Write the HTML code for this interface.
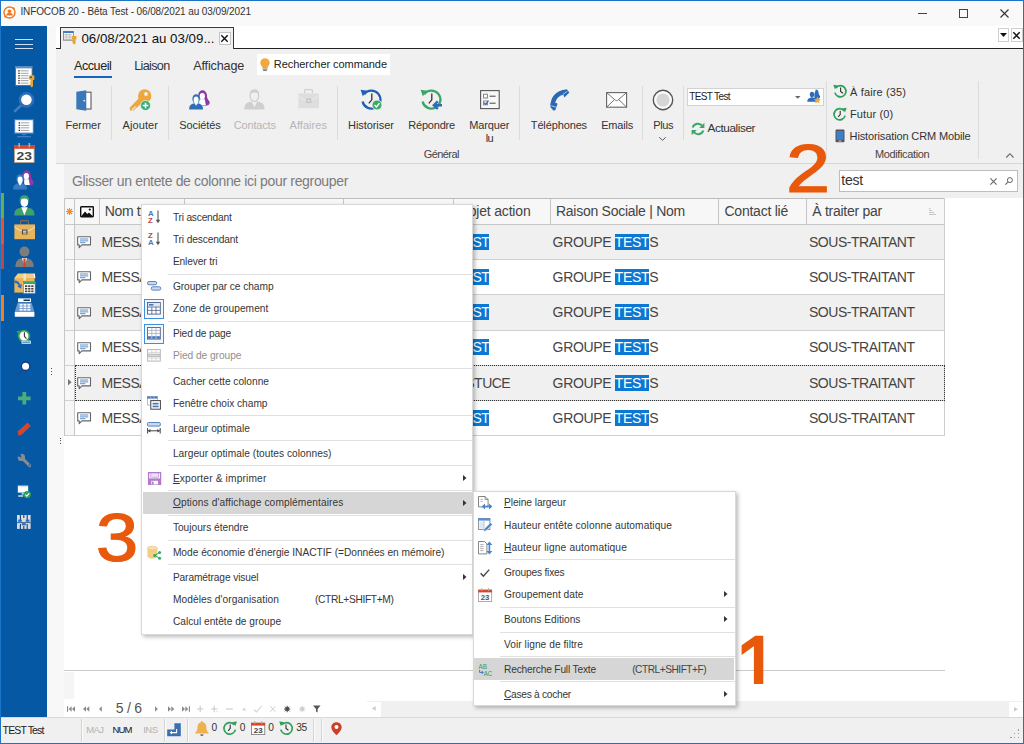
<!DOCTYPE html>
<html lang="fr">
<head>
<meta charset="utf-8">
<title>INFOCOB 20 - Bêta Test</title>
<style>
html,body{margin:0;padding:0;}
body{width:1024px;height:744px;overflow:hidden;background:#f8f8f8;position:relative;font-family:"Liberation Sans",sans-serif;font-size:10px;color:#333;}
#win{position:absolute;left:0;top:0;width:1024px;height:744px;overflow:hidden;}
#win>*{position:absolute;box-sizing:content-box;}
.t{white-space:nowrap;}
svg{display:block;overflow:visible;}
u{text-decoration:underline;text-underline-offset:1px;}
.hl{background:#0b78d4;color:#fff;}
</style>
</head>
<body>
<div id="win">
<div style="left:1px;top:1px;width:1022px;height:25px;background:#f9f9f9;"></div>
<div class="t" style="left:20.40px;top:6.79px;font-size:10px;line-height:10px;color:#333;letter-spacing:-0.103px;">INFOCOB 20 - Bêta Test - 06/08/2021 au 03/09/2021</div>
<div style="left:918px;top:13px;width:9px;height:1px;background:#444;"></div>
<div style="left:959px;top:9px;width:7px;height:7px;border:1px solid #444;"></div>
<svg style="left:1000px;top:8.5px;" width="9" height="9" viewBox="0 0 9 9"><path d="M0.5 0.5L8.5 8.5M8.5 0.5L0.5 8.5" stroke="#333" stroke-width="1.1" fill="none"/></svg>
<div style="left:1px;top:26px;width:46px;height:691px;background:#0458a4;"></div>
<div style="left:56px;top:26px;width:967px;height:22px;background:#fff;"></div>
<div style="left:998px;top:28px;width:9px;height:12px;background:#fff;border:1px solid #cfcfcf;"></div>
<svg style="left:1000px;top:32.5px;" width="7" height="4" viewBox="0 0 7 4"><path d="M0 0H7L3.5 4Z" fill="#111"/></svg>
<div style="left:1011px;top:28px;width:10px;height:12px;background:#fff;border:1px solid #cfcfcf;"></div>
<svg style="left:1013px;top:31.5px;" width="7" height="7" viewBox="0 0 7 7"><path d="M0.3 0.3L6.7 6.7M6.7 0.3L0.3 6.7" stroke="#111" stroke-width="1.5" fill="none"/></svg>
<div style="left:56px;top:49px;width:967px;height:114px;background:#f0f0f0;"></div>
<div style="left:56px;top:163px;width:967px;height:1px;background:#d6d6d6;"></div>
<div style="left:56px;top:48px;width:967px;height:1px;background:#222;"></div>
<div style="left:60px;top:27px;width:172px;height:21px;background:#f0f0f0;border:1px solid #3a3a3a;border-bottom:none;"></div>
<div class="t" style="left:81.40px;top:31.99px;font-size:13.3px;line-height:13.3px;color:#111;">06/08/2021 au 03/09...</div>
<div style="left:219px;top:32.2px;width:9.8px;height:10.8px;background:#fff;border:1px solid #c4c4c4;"></div>
<svg style="left:221.4px;top:35px;" width="7" height="7" viewBox="0 0 7 7"><path d="M0.3 0.3L6.7 6.7M6.7 0.3L0.3 6.7" stroke="#111" stroke-width="1.4" fill="none"/></svg>
<div style="left:64px;top:164px;width:959px;height:34px;background:#f0f0f0;"></div>
<div class="t" style="left:72.00px;top:174.40px;font-size:14px;line-height:14px;color:#7b7b7b;letter-spacing:-0.337px;">Glisser un entete de colonne ici pour regrouper</div>
<div style="left:64px;top:198px;width:959px;height:519px;background:#fff;"></div>
<div style="left:1px;top:717px;width:1022px;height:26px;background:#f0f0f0;"></div>
<div style="left:1px;top:717px;width:1022px;height:1px;background:#d9d9d9;"></div>
<div style="left:15px;top:39px;width:18px;height:1.1px;background:#cfe0f2;"></div>
<div style="left:15px;top:43.7px;width:18px;height:1.1px;background:#cfe0f2;"></div>
<div style="left:15px;top:48.2px;width:18px;height:1.1px;background:#cfe0f2;"></div>
<div style="left:1px;top:192.5px;width:3.2px;height:25.3px;background:#6ab04a;"></div>
<div style="left:1px;top:217.8px;width:3.2px;height:25.8px;background:#ee5228;"></div>
<div style="left:1px;top:243.6px;width:3.2px;height:25.2px;background:#c4463e;"></div>
<div style="left:1px;top:295px;width:3.2px;height:25.5px;background:#f07f22;"></div>
<svg style="left:14.5px;top:66px;" width="20" height="21" viewBox="0 0 20 21"><rect x="0.5" y="0.6" width="16.6" height="18.8" fill="#fff" stroke="#6a6a6a" stroke-width="0.9"/><rect x="0.2" y="0.2" width="17.2" height="2.2" fill="#5b8fd0"/><rect x="3.2" y="4.20" width="1.6" height="1.3" fill="#444"/><rect x="5.6" y="4.40" width="8" height="0.9" fill="#9a9a9a"/><rect x="3.2" y="6.65" width="1.6" height="1.3" fill="#444"/><rect x="5.6" y="6.85" width="8" height="0.9" fill="#9a9a9a"/><rect x="3.2" y="9.10" width="1.6" height="1.3" fill="#444"/><rect x="5.6" y="9.30" width="8" height="0.9" fill="#9a9a9a"/><rect x="3.2" y="11.55" width="1.6" height="1.3" fill="#444"/><rect x="5.6" y="11.75" width="8" height="0.9" fill="#9a9a9a"/><rect x="3.2" y="14.00" width="1.6" height="1.3" fill="#444"/><rect x="5.6" y="14.20" width="8" height="0.9" fill="#9a9a9a"/><rect x="3.2" y="16.45" width="1.6" height="1.3" fill="#444"/><rect x="5.6" y="16.65" width="8" height="0.9" fill="#9a9a9a"/><path d="M13 9.3h5.6a0.8 0.8 0 0 1 .8 .8v3.2a0.8 0.8 0 0 1-.8 .8h-.6v6.2l-1.2 1.2-1.2-1.2v-.9l-1-.6 1-.8v-.8l-1-.6 1-.8v-1.7h-.6a0.8 0.8 0 0 1-.8-.8v-3.2a0.8 0.8 0 0 1 .8-.8z" fill="#e9a52f"/><rect x="14.6" y="10.6" width="2.4" height="1.3" fill="#0458a4"/></svg>
<svg style="left:13px;top:91px;" width="22" height="22" viewBox="0 0 22 22"><path d="M8.2 14.2L2 20" stroke="#3f7cc4" stroke-width="2.6" stroke-linecap="round"/><circle cx="13.4" cy="8.8" r="6.6" fill="#fff" stroke="#2f6db8" stroke-width="2.6"/></svg>
<svg style="left:14px;top:118.6px;" width="20" height="19" viewBox="0 0 20 19"><rect x="0.6" y="0.6" width="18.8" height="13.6" fill="#fff" stroke="#3f7cc4" stroke-width="1.2"/><rect x="4.6" y="3.20" width="1.5" height="1.3" fill="#333"/><rect x="6.8" y="3.40" width="8.4" height="0.9" fill="#9a9a9a"/><rect x="4.6" y="5.70" width="1.5" height="1.3" fill="#333"/><rect x="6.8" y="5.90" width="8.4" height="0.9" fill="#9a9a9a"/><rect x="4.6" y="8.20" width="1.5" height="1.3" fill="#333"/><rect x="6.8" y="8.40" width="8.4" height="0.9" fill="#9a9a9a"/><rect x="4.6" y="10.70" width="1.5" height="1.3" fill="#333"/><rect x="6.8" y="10.90" width="8.4" height="0.9" fill="#9a9a9a"/><rect x="8" y="15" width="4" height="1.2" fill="#3f7cc4"/><rect x="3.2" y="17.2" width="13.6" height="1.1" fill="#4b88cc"/></svg>
<svg style="left:13.8px;top:143px;" width="21" height="20" viewBox="0 0 21 20"><rect x="0.5" y="2.4" width="19.6" height="17" fill="#fff" stroke="#c9a183" stroke-width="0.8"/><rect x="0.1" y="2" width="20.4" height="3.8" fill="#d9462c"/><rect x="4.4" y="0" width="1.5" height="4.2" fill="#b9b0a0"/><rect x="14.6" y="0" width="1.5" height="4.2" fill="#b9b0a0"/><text x="10.3" y="17.2" font-family="Liberation Sans, sans-serif" font-size="11.5" font-weight="700" text-anchor="middle" fill="#444" textLength="15.5" lengthAdjust="spacingAndGlyphs">23</text></svg>
<svg style="left:13.3px;top:169.8px;" width="22" height="20" viewBox="0 0 22 20"><ellipse cx="13.500" cy="5.300" rx="4.300" ry="5" fill="#8d3aa6"/><path d="M16.200 2.400c2.200 2.200 1.400 5.800 3.600 8.200 1.700 1.900 1 4.800-1.800 4.800h-4.600v-8z" fill="#8d3aa6"/><path d="M11.200 9.200h4.600l1 5.800h-5.600z" fill="#fff"/><ellipse cx="13.300" cy="6.300" rx="2.600" ry="3.300" fill="#fff"/><path d="M0.200 19.500c0-3.900 1.500-5.500 4.300-6.100l2.600-.7 2.600.7c2.800.6 4.300 2.200 4.300 6.100z" fill="#3a7bc6"/><ellipse cx="7.100" cy="8.900" rx="3.700" ry="4.700" fill="#3a7bc6"/><ellipse cx="7.100" cy="9.900" rx="2.500" ry="3.400" fill="#fff"/><path d="M5.300 13l1.800 2.800 1.800-2.800z" fill="#fff"/></svg>
<svg style="left:13.5px;top:194.5px;" width="21" height="21" viewBox="0 0 21 21"><path d="M0.300 20.400c0-5 2-6.600 5.400-7.400l4.700-1.200 4.700 1.200c3.400.8 5.400 2.400 5.400 7.400z" fill="#3fa06c"/><path d="M7.200 12.200l3.200 8 3.200-8z" fill="#fff"/><ellipse cx="10.400" cy="7" rx="3.900" ry="5" fill="#fff"/><path d="M5.800 7.200c-.8-4.800 1.400-7 4.600-7s5.400 2.200 4.600 7c-.6-2.600-2-3.600-4.600-3.600s-4 1-4.600 3.600z" fill="#3fa06c"/></svg>
<svg style="left:13.5px;top:220px;" width="22" height="20" viewBox="0 0 22 20"><path d="M6.600 4.600v-3a1 1 0 0 1 1-1h5.800a1 1 0 0 1 1 1v3" fill="none" stroke="#8a6a4a" stroke-width="1.1"/><rect x="0.400" y="4.400" width="20.600" height="14.800" fill="#e8b45c"/><path d="M0.400 6.600c3 3 6.600 4.600 10.300 4.600s7.300-1.600 10.300-4.600" fill="none" stroke="#f7e6c4" stroke-width="1"/><rect x="7.900" y="9.600" width="5.600" height="4.800" fill="#4a4a4a"/><rect x="9" y="10.700" width="3.400" height="1" fill="#fff"/><rect x="9" y="12.500" width="3.400" height="1" fill="#fff"/></svg>
<svg style="left:14.5px;top:245.5px;" width="20" height="22" viewBox="0 0 20 22"><circle cx="9.500" cy="5.600" r="5" fill="#7d7d7d"/><path d="M0.400 21c0-5.400 2.400-7.600 5.600-8.400l3.500-.8 3.500.8c3.200.8 5.600 3 5.600 8.400z" fill="#7d7d7d"/><path d="M7 12.200l2.500 8.800 2.500-8.800z" fill="#fff"/><path d="M8.500 12.400h2l.5 7.600-1.500 1.200-1.500-1.200z" fill="#d9462c"/></svg>
<svg style="left:13.5px;top:272.5px;" width="22" height="21" viewBox="0 0 22 21"><path d="M0.400 5l3.400-4.400h16.400l0.400 4.400z" fill="#f3cf86"/><rect x="0.400" y="5" width="20.200" height="14.600" fill="#e8b45c"/><path d="M20.200 0.600l.6 4.600" stroke="#fff" stroke-width="1.2"/><rect x="9.400" y="0.600" width="2.600" height="7" fill="#f7e2b4"/><path d="M0.500 7.500c3 0 5 1.600 5.800 4.200l1.600-.6-.8 4.600-4-2.400 1.500-.6c-.6-1.700-2-2.700-4.100-2.700z" fill="#2d6cb9"/><rect x="9.500" y="8.600" width="11.600" height="11.800" fill="#fff" stroke="#777" stroke-width="0.6"/><rect x="9.500" y="8.600" width="11.600" height="2.500" fill="#3aa66a"/><rect x="11.0" y="12.3" width="2.300" height="1.700" fill="#444"/><rect x="11.0" y="14.9" width="2.300" height="1.700" fill="#444"/><rect x="11.0" y="17.5" width="2.300" height="1.700" fill="#444"/><rect x="14.1" y="12.3" width="2.300" height="1.700" fill="#444"/><rect x="14.1" y="14.9" width="2.300" height="1.700" fill="#444"/><rect x="14.1" y="17.5" width="2.300" height="1.700" fill="#444"/><rect x="17.2" y="12.3" width="2.300" height="1.700" fill="#444"/><rect x="17.2" y="14.9" width="2.300" height="1.700" fill="#444"/><rect x="17.2" y="17.5" width="2.300" height="1.700" fill="#444"/></svg>
<svg style="left:13.5px;top:297.5px;" width="22" height="20" viewBox="0 0 22 20"><rect x="4" y="0.400" width="13" height="3.800" fill="#fff"/><rect x="9.500" y="1.500" width="6.400" height="1.500" fill="#234"/><path d="M3.600 5h14l2.800 8.400h-19.600z" fill="#6c9ad2"/><rect x="5.6" y="5.9" width="2.900" height="1.700" fill="#fff"/><rect x="5.6" y="8.4" width="2.900" height="1.700" fill="#fff"/><rect x="5.6" y="10.9" width="2.900" height="1.700" fill="#fff"/><rect x="9.5" y="5.9" width="2.900" height="1.700" fill="#fff"/><rect x="9.5" y="8.4" width="2.900" height="1.700" fill="#fff"/><rect x="9.5" y="10.9" width="2.900" height="1.700" fill="#fff"/><rect x="13.4" y="5.9" width="2.900" height="1.700" fill="#fff"/><rect x="13.4" y="8.4" width="2.900" height="1.700" fill="#fff"/><rect x="13.4" y="10.9" width="2.900" height="1.700" fill="#fff"/><rect x="0.800" y="13.800" width="19.600" height="5" rx="0.6" fill="#fff"/></svg>
<svg style="left:16px;top:328.5px;" width="17" height="16" viewBox="0 0 17 16"><circle cx="8" cy="7" r="5.400" fill="#fff" stroke="#2fa05c" stroke-width="1.800"/><path d="M0.200 2.200l4.200-.8-1 4.400z" fill="#2fa05c"/><path d="M8.400 3.200v4.200l2 2.200" fill="none" stroke="#333" stroke-width="1.100"/><rect x="5.600" y="11.600" width="9.200" height="3.200" fill="#e8f0fa"/><rect x="6.400" y="12.500" width="7.600" height="1.300" fill="#4a86c8"/></svg>
<svg style="left:17px;top:360.5px;" width="15" height="15" viewBox="0 0 15 15"><path d="M5.400 9.400L1 13.600" stroke="#26478c" stroke-width="1.300" stroke-linecap="round"/><circle cx="8.600" cy="5.300" r="4.200" fill="#fff" stroke="#173a7c" stroke-width="1.300"/></svg>
<svg style="left:17.8px;top:392px;" width="13" height="13" viewBox="0 0 13 13"><path d="M4.400 0h3.800v4.400h4.400v3.800h-4.400v4.400h-3.800v-4.400h-4.400v-3.800h4.400z" fill="#4aab7c"/></svg>
<svg style="left:17px;top:422px;" width="15" height="14" viewBox="0 0 15 14"><path d="M10.600 0.600l3.200 3.400-9.200 8.800-2.600-1 -1.400-2.400z" fill="#d9452b"/><path d="M0.600 9.400l3.200.6.800 2.800-3.200.8z" fill="#d9452b"/></svg>
<svg style="left:17px;top:453px;" width="15" height="15" viewBox="0 0 15 15"><path d="M5 5l7.600 7.600" stroke="#858d96" stroke-width="3" stroke-linecap="round"/><circle cx="4.400" cy="4.400" r="3.700" fill="#858d96"/><path d="M4.600 4.600l-5-1.600 3.400-3.400z" fill="#0458a4"/><circle cx="12.300" cy="12.300" r="0.800" fill="#0458a4"/></svg>
<svg style="left:17px;top:484.5px;" width="15" height="14" viewBox="0 0 15 14"><rect x="0.800" y="0.600" width="10.400" height="7" fill="#fff"/><rect x="1.400" y="1.200" width="9.200" height="1" fill="#cfe0f2"/><rect x="4.600" y="8" width="2.400" height="1.600" fill="#b8cfe8"/><rect x="1.200" y="10.400" width="5" height="1.200" fill="#fff"/><circle cx="10.200" cy="9.600" r="3.700" fill="#2fa05c"/><path d="M8.400 9.600l1.400 1.500 2.400-2.800" fill="none" stroke="#fff" stroke-width="1.100"/></svg>
<svg style="left:17.3px;top:515.3px;" width="14" height="14" viewBox="0 0 14 14"><rect x="0" y="0" width="13.600" height="13.900" fill="#d9dde2"/><path d="M3.400 0v5M6.800 0v3M10.200 0v5M3.400 9v5M6.800 11v3M10.200 9v5" stroke="#12407e" stroke-width="1.100"/><rect x="1.200" y="4.600" width="3.600" height="2.200" fill="#2d6cb9"/><rect x="8.800" y="4.600" width="3.600" height="2.200" fill="#2d6cb9"/><rect x="4.800" y="8.200" width="4" height="2.200" fill="#2d6cb9"/><path d="M0 7.600h13.600" stroke="#12407e" stroke-width="0.800"/></svg>
<div style="left:51px;top:367.5px;width:1.2px;height:1.2px;background:#555;"></div>
<div style="left:51px;top:370.5px;width:1.2px;height:1.2px;background:#555;"></div>
<div style="left:51px;top:373.5px;width:1.2px;height:1.2px;background:#555;"></div>
<div style="left:59.5px;top:437.5px;width:1.2px;height:1.2px;background:#555;"></div>
<div style="left:59.5px;top:440.3px;width:1.2px;height:1.2px;background:#555;"></div>
<div style="left:59.5px;top:443px;width:1.2px;height:1.2px;background:#555;"></div>
<div class="t" style="left:74.00px;top:59.58px;font-size:12.6px;line-height:12.6px;color:#222;letter-spacing:-0.458px;">Accueil</div>
<div style="left:74px;top:75.8px;width:37.5px;height:2.2px;background:#1565c0;"></div>
<div class="t" style="left:134.20px;top:59.58px;font-size:12.6px;line-height:12.6px;color:#333;letter-spacing:-0.660px;">Liaison</div>
<div class="t" style="left:193.20px;top:59.58px;font-size:12.6px;line-height:12.6px;color:#333;letter-spacing:-0.142px;">Affichage</div>
<div style="left:257px;top:54.3px;width:133px;height:20.3px;background:#fff;"></div>
<svg style="left:260px;top:57.6px;" width="10" height="13.4" viewBox="0 0 10 13.4"><path d="M5 0.200c2.700 0 4.700 2 4.700 4.500 0 1.600-.8 2.600-1.500 3.600-.4.600-.6 1.100-.6 1.700h-5.200c0-.6-.2-1.100-.6-1.700-.700-1-1.500-2-1.500-3.600 0-2.500 2-4.500 4.700-4.500z" fill="#f2a93b"/><rect x="2.600" y="10.500" width="4.800" height="1.100" fill="#8a6a3a"/><rect x="3.200" y="12" width="3.600" height="1" fill="#777"/></svg>
<div class="t" style="left:273.80px;top:58.94px;font-size:11px;line-height:11px;color:#222;letter-spacing:-0.060px;">Rechercher commande</div>
<svg style="left:76px;top:89.5px;" width="16" height="21" viewBox="0 0 16 21"><rect x="8.400" y="2.200" width="6.600" height="16.800" fill="#fff" stroke="#666" stroke-width="1.200"/><path d="M0.300 1.800l10-1.500v20.400l-10-1.500z" fill="#3b78b9"/><circle cx="8.300" cy="10.700" r="0.900" fill="#dfe9f5"/></svg>
<div class="t" style="left:65.50px;top:119.94px;font-size:11px;line-height:11px;color:#333;letter-spacing:-0.026px;">Fermer</div>
<div style="left:111px;top:86px;width:1px;height:53.599999999999994px;background:#dcdcdc;"></div>
<svg style="left:129px;top:88.5px;" width="23" height="22" viewBox="0 0 23 22"><path d="M9.800 9.200l4 4-9.200 8.200h-3.800v-2.800z" fill="#eaa83e"/><path d="M3.600 21.400v-1.800h1.800v-1.600h1.800" fill="none" stroke="#f0f0f0" stroke-width="0.900"/><circle cx="15.700" cy="7" r="6.700" fill="#eaa83e"/><circle cx="17" cy="5" r="1.900" fill="#f0f0f0"/><circle cx="16.500" cy="16.500" r="5" fill="#3aaa78" stroke="#f0f0f0" stroke-width="0.800"/><path d="M16.500 13.700v5.600M13.700 16.500h5.600" stroke="#fff" stroke-width="1.500"/></svg>
<div class="t" style="left:122.50px;top:119.94px;font-size:11px;line-height:11px;color:#333;letter-spacing:0.092px;">Ajouter</div>
<div style="left:167.6px;top:86px;width:1px;height:53.599999999999994px;background:#dcdcdc;"></div>
<svg style="left:188.5px;top:89.6px;" width="22" height="20" viewBox="0 0 22 20"><ellipse cx="13.500" cy="5.300" rx="4.300" ry="5" fill="#8d3aa6"/><path d="M16.200 2.400c2.200 2.200 1.400 5.800 3.600 8.200 1.700 1.900 1 4.800-1.800 4.800h-4.600v-8z" fill="#8d3aa6"/><path d="M11.200 9.200h4.600l1 5.800h-5.600z" fill="#fff"/><ellipse cx="13.300" cy="6.300" rx="2.600" ry="3.300" fill="#fff"/><path d="M0.200 19.500c0-3.900 1.500-5.500 4.300-6.100l2.600-.7 2.600.7c2.800.6 4.300 2.200 4.300 6.100z" fill="#2f6fb8"/><ellipse cx="7.100" cy="8.900" rx="3.700" ry="4.700" fill="#2f6fb8"/><ellipse cx="7.100" cy="9.900" rx="2.500" ry="3.400" fill="#fff"/><path d="M5.300 13l1.800 2.800 1.800-2.800z" fill="#fff"/></svg>
<div class="t" style="left:179.20px;top:119.94px;font-size:11px;line-height:11px;color:#333;letter-spacing:-0.075px;">Sociétés</div>
<svg style="left:243.5px;top:89px;" width="21" height="21" viewBox="0 0 21 21"><path d="M0.300 20.400c0-5 2-6.600 5.400-7.400l4.700-1.200 4.700 1.200c3.400.800 5.400 2.400 5.400 7.400z" fill="#cfcfcf"/><path d="M7.400 12.200l3 6 3-6z" fill="#f0f0f0"/><ellipse cx="10.400" cy="7" rx="4.300" ry="5.400" fill="#f0f0f0" stroke="#cfcfcf" stroke-width="1.200"/><path d="M5.800 6.800c-.6-4.600 1.400-6.600 4.600-6.600s5.200 2 4.600 6.600c-.6-2.400-2-3.400-4.600-3.400s-4 1-4.600 3.400z" fill="#cfcfcf"/></svg>
<div class="t" style="left:233.80px;top:119.94px;font-size:11px;line-height:11px;color:#b5b5b5;letter-spacing:-0.178px;">Contacts</div>
<svg style="left:297.5px;top:88.5px;" width="22" height="20" viewBox="0 0 22 20"><path d="M6.600 4.600v-3a1 1 0 0 1 1-1h5.800a1 1 0 0 1 1 1v3" fill="none" stroke="#cfcfcf" stroke-width="1.200"/><rect x="0.400" y="4.400" width="20.600" height="14.800" fill="#dedede"/><path d="M0.400 6.600c3 3 6.600 4.600 10.300 4.600s7.300-1.600 10.300-4.600" fill="none" stroke="#ececec" stroke-width="1"/><rect x="8.200" y="9.600" width="5" height="4.400" fill="#c4c4c4"/><rect x="9.600" y="11" width="2.200" height="1.600" fill="#ececec"/></svg>
<div class="t" style="left:289.50px;top:119.94px;font-size:11px;line-height:11px;color:#b5b5b5;letter-spacing:0.051px;">Affaires</div>
<div style="left:336.5px;top:86px;width:1px;height:53.599999999999994px;background:#dcdcdc;"></div>
<svg style="left:359.5px;top:88px;" width="23" height="23" viewBox="0 0 23 23"><path d="M4.200 6.200a9 9 0 1 1-1.600 7.200" fill="none" stroke="#1f5fb8" stroke-width="2.300"/><path d="M0.600 1.800l6.800 1-4.600 5.400z" fill="#1f5fb8"/><path d="M11.800 5.400v6.400l-3 3.600" fill="none" stroke="#333" stroke-width="1.300"/><circle cx="17" cy="17" r="5" fill="#3aaa66" stroke="#f0f0f0" stroke-width="0.900"/><path d="M14.600 17l1.800 1.900 3.100-3.600" fill="none" stroke="#fff" stroke-width="1.400"/></svg>
<div class="t" style="left:348.00px;top:119.94px;font-size:11px;line-height:11px;color:#333;letter-spacing:-0.065px;">Historiser</div>
<svg style="left:420px;top:88px;" width="23" height="23" viewBox="0 0 23 23"><path d="M4.200 6.200a9 9 0 1 1-1.600 7.200" fill="none" stroke="#3aa66a" stroke-width="2.300"/><path d="M0.600 1.800l6.800 1-4.600 5.400z" fill="#3aa66a"/><path d="M11.800 5.400v6.400l-3 3.600" fill="none" stroke="#333" stroke-width="1.300"/><path d="M22 17.200h-7.400M17.800 13.400l-4 3.800 4 3.800" fill="none" stroke="#2d6cb9" stroke-width="2.400"/></svg>
<div class="t" style="left:408.30px;top:119.94px;font-size:11px;line-height:11px;color:#333;letter-spacing:-0.204px;">Répondre</div>
<svg style="left:480px;top:89.8px;" width="20" height="20" viewBox="0 0 20 20"><rect x="0.600" y="0.600" width="18.600" height="18" fill="#f7f7f7" stroke="#555" stroke-width="1.100"/><rect x="3.600" y="4.200" width="3.800" height="3.800" fill="#fff" stroke="#777" stroke-width="0.900"/><path d="M9.600 6.200h6" stroke="#444" stroke-width="1"/><rect x="3.600" y="11" width="3.800" height="3.800" fill="#fff" stroke="#777" stroke-width="0.900"/><path d="M9.600 13.200h6" stroke="#444" stroke-width="1"/><path d="M4.200 12.600l1.500 1.700 2.800-3.600" fill="none" stroke="#2d6cb9" stroke-width="1.300"/></svg>
<div class="t" style="left:469.20px;top:119.94px;font-size:11px;line-height:11px;color:#333;letter-spacing:-0.124px;">Marquer</div>
<div class="t" style="left:485.80px;top:132.94px;font-size:11px;line-height:11px;color:#333;letter-spacing:-0.681px;">lu</div>
<div style="left:519px;top:86px;width:1px;height:53.599999999999994px;background:#dcdcdc;"></div>
<div class="t" style="left:423.80px;top:148.94px;font-size:11px;line-height:11px;color:#444;letter-spacing:-0.592px;">Général</div>
<svg style="left:549px;top:88.5px;" width="21" height="22" viewBox="0 0 21 22"><path d="M15.400 3.200c-7 .8-11.400 6-11.600 12.600" fill="none" stroke="#2a68b2" stroke-width="4.400"/><path d="M12.600 1.200l5.200-1 2.600 3.200-5 5z" fill="#2a68b2"/><path d="M1.300 14.600l6.600-.6 .6 1-2.200 6.200-2 .2-2.600-2.800z" fill="#2a68b2"/><path d="M13.800 5.600l4.600-3.400M2.400 16.800l4.600 1.400" stroke="#e6eef8" stroke-width="0.700"/></svg>
<div class="t" style="left:530.80px;top:119.94px;font-size:11px;line-height:11px;color:#333;letter-spacing:-0.130px;">Téléphones</div>
<svg style="left:605.7px;top:91.5px;" width="22" height="16" viewBox="0 0 22 16"><rect x="0.600" y="0.600" width="20" height="14.600" fill="#fdfdfd" stroke="#666" stroke-width="1.100"/><path d="M0.800 0.800l8.600 7.400c.7.600 1.700.600 2.400 0l8.600-7.400M0.800 15l7.400-7.200M20.400 15l-7.400-7.200" fill="none" stroke="#666" stroke-width="0.900"/></svg>
<div class="t" style="left:601.20px;top:119.94px;font-size:11px;line-height:11px;color:#333;letter-spacing:-0.203px;">Emails</div>
<div style="left:642.3px;top:86px;width:1px;height:53.599999999999994px;background:#dcdcdc;"></div>
<svg style="left:651.5px;top:88.5px;" width="22" height="22" viewBox="0 0 22 22"><circle cx="11" cy="11" r="9.700" fill="#fafafa" stroke="#555" stroke-width="1.400"/><circle cx="11" cy="11" r="6.600" fill="#d6d6d6"/></svg>
<div class="t" style="left:653.20px;top:119.94px;font-size:11px;line-height:11px;color:#333;letter-spacing:-0.352px;">Plus</div>
<svg style="left:659px;top:137px;" width="7" height="4" viewBox="0 0 7 4"><path d="M0.300 0.300l3.200 3 3.200-3" fill="none" stroke="#555" stroke-width="1"/></svg>
<div style="left:682.6px;top:86px;width:1px;height:53.599999999999994px;background:#dcdcdc;"></div>
<div style="left:686.6px;top:88.2px;width:135.4px;height:15.8px;background:#fff;border:1px solid #d2d2d2;"></div>
<div class="t" style="left:689.20px;top:91.78px;font-size:10px;line-height:10px;color:#222;letter-spacing:-0.614px;">TEST Test</div>
<svg style="left:794.5px;top:95.5px;" width="6" height="3" viewBox="0 0 6 3"><path d="M0 0h5.600l-2.800 2.800z" fill="#666"/></svg>
<svg style="left:806.5px;top:89px;" width="15" height="15" viewBox="0 0 15 15"><path d="M8.800 0.400c1.800 0 2.800 1.400 2.800 3.200 0 1.600.6 2.800 1.600 3.600-.2 1.800-1.200 2.800-2.800 2.800h-3v-5z" fill="#2d6cb9"/><path d="M0.200 12.800c0-2.600 1.200-3.700 3.200-4.100l1.600-.4 1.600.4c2 .4 3.200 1.500 3.200 4.100z" fill="#2d6cb9"/><ellipse cx="5" cy="5.600" rx="2.200" ry="2.800" fill="#2d6cb9"/><path d="M10.400 7.600l1.100 2.300 2.500.3-1.900 1.700.5 2.500-2.200-1.300-2.200 1.300.5-2.500-1.900-1.700 2.500-.3z" fill="#f0a63a"/></svg>
<svg style="left:691px;top:122px;" width="14" height="14" viewBox="0 0 14 14"><path d="M11.400 4.200a5.400 5.400 0 0 0-9.700 1.300" fill="none" stroke="#3aa66a" stroke-width="2"/><path d="M13.400 0.800v5.200h-5.200z" fill="#3aa66a"/><path d="M2.600 9.800a5.400 5.400 0 0 0 9.700-1.300" fill="none" stroke="#3aa66a" stroke-width="2"/><path d="M0.600 13.200v-5.200h5.200z" fill="#3aa66a"/></svg>
<div class="t" style="left:707.50px;top:123.26px;font-size:11.8px;line-height:11.8px;color:#333;letter-spacing:-0.420px;">Actualiser</div>
<div style="left:826px;top:81.3px;width:1px;height:77.50000000000001px;background:#dcdcdc;"></div>
<svg style="left:833px;top:84.2px;" width="14" height="14" viewBox="0 0 14 14"><path d="M2.800 4a5.600 5.600 0 1 1-.9 4.600" fill="none" stroke="#2fa05c" stroke-width="1.700"/><path d="M0.300 0.800l4.600.6-3 3.800z" fill="#2fa05c"/><path d="M7.600 3.600v3.800l2.400 1.800" fill="none" stroke="#333" stroke-width="1.100"/></svg>
<div class="t" style="left:850.00px;top:86.94px;font-size:11px;line-height:11px;color:#333;letter-spacing:0.148px;">À faire (35)</div>
<svg style="left:833px;top:106.6px;" width="14" height="14" viewBox="0 0 14 14"><path d="M11.200 4a5.600 5.600 0 1 0 .9 4.600" fill="none" stroke="#2fa05c" stroke-width="1.700"/><path d="M13.700 0.800l-4.600.6 3 3.800z" fill="#2fa05c"/><path d="M7.200 3.800v3.800l-2 2.200" fill="none" stroke="#333" stroke-width="1.100"/></svg>
<div class="t" style="left:850.00px;top:108.94px;font-size:11px;line-height:11px;color:#333;letter-spacing:0.113px;">Futur (0)</div>
<svg style="left:835px;top:128.6px;" width="10" height="14" viewBox="0 0 10 14"><rect x="0.500" y="0.500" width="9" height="12.800" rx="1.200" fill="#555"/><rect x="1.600" y="2" width="6.800" height="8.800" fill="#3b7fd0"/><rect x="3.600" y="11.600" width="2.800" height="0.900" fill="#ddd"/></svg>
<div class="t" style="left:849.60px;top:130.94px;font-size:11px;line-height:11px;color:#333;letter-spacing:-0.129px;">Historisation CRM Mobile</div>
<div class="t" style="left:875.00px;top:148.94px;font-size:11px;line-height:11px;color:#444;letter-spacing:-0.375px;">Modification</div>
<div style="left:977.6px;top:81.4px;width:1px;height:77.5px;background:#dcdcdc;"></div>
<svg style="left:1006.3px;top:153px;" width="8" height="5" viewBox="0 0 8 5"><path d="M0.300 4.500l3.600-3.800 3.600 3.800" fill="none" stroke="#666" stroke-width="1.100"/></svg>
<div style="left:839px;top:170.2px;width:176.5px;height:19.5px;background:#fff;border:1px solid #bdbdbd;"></div>
<div class="t" style="left:841.30px;top:173.40px;font-size:14px;line-height:14px;color:#333;letter-spacing:-0.270px;">test</div>
<svg style="left:990.3px;top:178px;" width="7" height="7" viewBox="0 0 7 7"><path d="M0.400 0.400l6.200 6.200M6.600 0.400l-6.200 6.200" stroke="#666" stroke-width="1.100" fill="none"/></svg>
<svg style="left:1005px;top:177.4px;" width="8" height="8" viewBox="0 0 8 8"><circle cx="4.900" cy="3.100" r="2.500" fill="none" stroke="#666" stroke-width="1"/><path d="M3.100 4.900l-2.700 2.700" stroke="#666" stroke-width="1.100"/></svg>
<div style="left:64px;top:198px;width:881px;height:27px;background:#f7f7f7;"></div>
<div style="left:75px;top:225.0px;width:870px;height:35.22px;background:#f0f0f0;"></div>
<div style="left:65px;top:225.0px;width:9px;height:35.22px;background:#f7f7f7;"></div>
<div style="left:64px;top:259.22px;width:881px;height:1px;background:#d0d0d0;"></div>
<div style="left:75px;top:260.22px;width:870px;height:35.22px;background:#fff;"></div>
<div style="left:65px;top:260.22px;width:9px;height:35.22px;background:#f7f7f7;"></div>
<div style="left:64px;top:294.44000000000005px;width:881px;height:1px;background:#d0d0d0;"></div>
<div style="left:75px;top:295.44px;width:870px;height:35.22px;background:#f0f0f0;"></div>
<div style="left:65px;top:295.44px;width:9px;height:35.22px;background:#f7f7f7;"></div>
<div style="left:64px;top:329.65999999999997px;width:881px;height:1px;background:#d0d0d0;"></div>
<div style="left:75px;top:330.65999999999997px;width:870px;height:35.22px;background:#fff;"></div>
<div style="left:65px;top:330.65999999999997px;width:9px;height:35.22px;background:#f7f7f7;"></div>
<div style="left:64px;top:364.88px;width:881px;height:1px;background:#d0d0d0;"></div>
<div style="left:75px;top:365.88px;width:870px;height:35.22px;background:#f0f0f0;"></div>
<div style="left:65px;top:365.88px;width:9px;height:35.22px;background:#f7f7f7;"></div>
<div style="left:64px;top:400.1px;width:881px;height:1px;background:#d0d0d0;"></div>
<div style="left:75px;top:401.1px;width:870px;height:35.22px;background:#fff;"></div>
<div style="left:65px;top:401.1px;width:9px;height:35.22px;background:#f7f7f7;"></div>
<div style="left:64px;top:435.32000000000005px;width:881px;height:1px;background:#d0d0d0;"></div>
<div style="left:64px;top:197.5px;width:881px;height:1.6px;background:#bcbcbc;"></div>
<div style="left:64px;top:224px;width:881px;height:1px;background:#c6c6c6;"></div>
<div style="left:64px;top:198px;width:1px;height:238.3px;background:#c6c6c6;"></div>
<div style="left:74px;top:198px;width:1px;height:238.3px;background:#c6c6c6;"></div>
<div style="left:944px;top:198px;width:1px;height:238.3px;background:#cdcdcd;"></div>
<div style="left:99px;top:199px;width:1px;height:25px;background:#c6c6c6;"></div>
<div style="left:184px;top:199px;width:1px;height:25px;background:#c6c6c6;"></div>
<div style="left:343px;top:199px;width:1px;height:25px;background:#c6c6c6;"></div>
<div style="left:453px;top:199px;width:1px;height:25px;background:#c6c6c6;"></div>
<div style="left:550px;top:199px;width:1px;height:25px;background:#c6c6c6;"></div>
<div style="left:718px;top:199px;width:1px;height:25px;background:#c6c6c6;"></div>
<div style="left:806px;top:199px;width:1px;height:25px;background:#c6c6c6;"></div>
<svg style="left:66px;top:207.8px;" width="7" height="7" viewBox="0 0 7 7"><path d="M3.500 0v7M0 3.500h7M1 1l5 5M6 1l-5 5" stroke="#f08a2a" stroke-width="1.100"/><circle cx="3.500" cy="3.500" r="1.700" fill="#f08a2a"/></svg>
<svg style="left:80px;top:205.5px;" width="14" height="11.5" viewBox="0 0 14 11.5"><rect x="0.700" y="0.700" width="12.600" height="10" rx="0.600" fill="#fff" stroke="#111" stroke-width="1.400"/><path d="M1.400 10l3.600-4.600 2.400 2.600 1.600-1.400 3.600 3.400z" fill="#111"/><circle cx="9.800" cy="3.600" r="1.100" fill="#111"/></svg>
<div class="t" style="left:104.80px;top:204.40px;font-size:14px;line-height:14px;color:#444;letter-spacing:-0.375px;">Nom type</div>
<div class="t" style="left:458.00px;top:204.40px;font-size:14px;line-height:14px;color:#444;letter-spacing:-0.185px;">Objet action</div>
<div class="t" style="left:556.00px;top:204.40px;font-size:14px;line-height:14px;color:#444;letter-spacing:-0.269px;">Raison Sociale | Nom</div>
<div class="t" style="left:724.50px;top:204.40px;font-size:14px;line-height:14px;color:#444;letter-spacing:-0.241px;">Contact lié</div>
<div class="t" style="left:812.20px;top:204.40px;font-size:14px;line-height:14px;color:#444;letter-spacing:-0.257px;">À traiter par</div>
<svg style="left:928.5px;top:208px;" width="7" height="7" viewBox="0 0 7 7"><path d="M0 0.500h1.600M0 2.500h3.200M0 4.500h5M0 6.500h7" stroke="#c4c4c4" stroke-width="1"/></svg>
<svg style="left:77px;top:236.2px;" width="15" height="13" viewBox="0 0 15 13"><path d="M0.700 0.700h12.800v8.200h-8.600l-2.700 2.700v-2.700h-1.500z" fill="#fff" stroke="#666" stroke-width="1.100" stroke-linejoin="round"/><path d="M3 3h8.200M3 4.900h8.200M3 6.700h5.400" stroke="#4a86c8" stroke-width="0.900"/></svg>
<div class="t" style="left:101.60px;top:235.40px;font-size:14px;line-height:14px;color:#454545;letter-spacing:-0.495px;">MESSAGE</div>
<div class="t" style="left:456.30px;top:235.40px;font-size:14px;line-height:14px;color:#fff;letter-spacing:-0.795px;"><span class="hl">TEST</span></div>
<div class="t" style="left:552.60px;top:235.40px;font-size:14px;line-height:14px;color:#454545;letter-spacing:-0.320px;">GROUPE <span class="hl">TEST</span>S</div>
<div class="t" style="left:809.00px;top:235.40px;font-size:14px;line-height:14px;color:#454545;letter-spacing:-0.481px;">SOUS-TRAITANT</div>
<svg style="left:77px;top:271.42px;" width="15" height="13" viewBox="0 0 15 13"><path d="M0.700 0.700h12.800v8.200h-8.600l-2.700 2.700v-2.700h-1.500z" fill="#fff" stroke="#666" stroke-width="1.100" stroke-linejoin="round"/><path d="M3 3h8.200M3 4.900h8.200M3 6.700h5.400" stroke="#4a86c8" stroke-width="0.900"/></svg>
<div class="t" style="left:101.60px;top:270.40px;font-size:14px;line-height:14px;color:#454545;letter-spacing:-0.495px;">MESSAGE</div>
<div class="t" style="left:456.30px;top:270.40px;font-size:14px;line-height:14px;color:#fff;letter-spacing:-0.795px;"><span class="hl">TEST</span></div>
<div class="t" style="left:552.60px;top:270.40px;font-size:14px;line-height:14px;color:#454545;letter-spacing:-0.320px;">GROUPE <span class="hl">TEST</span>S</div>
<div class="t" style="left:809.00px;top:270.40px;font-size:14px;line-height:14px;color:#454545;letter-spacing:-0.481px;">SOUS-TRAITANT</div>
<svg style="left:77px;top:306.64px;" width="15" height="13" viewBox="0 0 15 13"><path d="M0.700 0.700h12.800v8.200h-8.600l-2.700 2.700v-2.700h-1.500z" fill="#fff" stroke="#666" stroke-width="1.100" stroke-linejoin="round"/><path d="M3 3h8.200M3 4.900h8.200M3 6.700h5.400" stroke="#4a86c8" stroke-width="0.900"/></svg>
<div class="t" style="left:101.60px;top:305.40px;font-size:14px;line-height:14px;color:#454545;letter-spacing:-0.495px;">MESSAGE</div>
<div class="t" style="left:456.30px;top:305.40px;font-size:14px;line-height:14px;color:#fff;letter-spacing:-0.795px;"><span class="hl">TEST</span></div>
<div class="t" style="left:552.60px;top:305.40px;font-size:14px;line-height:14px;color:#454545;letter-spacing:-0.320px;">GROUPE <span class="hl">TEST</span>S</div>
<div class="t" style="left:809.00px;top:305.40px;font-size:14px;line-height:14px;color:#454545;letter-spacing:-0.481px;">SOUS-TRAITANT</div>
<svg style="left:77px;top:341.85999999999996px;" width="15" height="13" viewBox="0 0 15 13"><path d="M0.700 0.700h12.800v8.200h-8.600l-2.700 2.700v-2.700h-1.500z" fill="#fff" stroke="#666" stroke-width="1.100" stroke-linejoin="round"/><path d="M3 3h8.200M3 4.900h8.200M3 6.700h5.400" stroke="#4a86c8" stroke-width="0.900"/></svg>
<div class="t" style="left:101.60px;top:340.40px;font-size:14px;line-height:14px;color:#454545;letter-spacing:-0.495px;">MESSAGE</div>
<div class="t" style="left:456.30px;top:340.40px;font-size:14px;line-height:14px;color:#fff;letter-spacing:-0.795px;"><span class="hl">TEST</span></div>
<div class="t" style="left:552.60px;top:340.40px;font-size:14px;line-height:14px;color:#454545;letter-spacing:-0.320px;">GROUPE <span class="hl">TEST</span>S</div>
<div class="t" style="left:809.00px;top:340.40px;font-size:14px;line-height:14px;color:#454545;letter-spacing:-0.481px;">SOUS-TRAITANT</div>
<svg style="left:77px;top:377.08px;" width="15" height="13" viewBox="0 0 15 13"><path d="M0.700 0.700h12.800v8.200h-8.600l-2.700 2.700v-2.700h-1.500z" fill="#fff" stroke="#666" stroke-width="1.100" stroke-linejoin="round"/><path d="M3 3h8.200M3 4.900h8.200M3 6.700h5.400" stroke="#4a86c8" stroke-width="0.900"/></svg>
<div class="t" style="left:101.60px;top:376.40px;font-size:14px;line-height:14px;color:#454545;letter-spacing:-0.495px;">MESSAGE</div>
<div class="t" style="left:456.50px;top:376.40px;font-size:14px;line-height:14px;color:#454545;letter-spacing:-0.533px;">ASTUCE</div>
<div class="t" style="left:552.60px;top:376.40px;font-size:14px;line-height:14px;color:#454545;letter-spacing:-0.320px;">GROUPE <span class="hl">TEST</span>S</div>
<div class="t" style="left:809.00px;top:376.40px;font-size:14px;line-height:14px;color:#454545;letter-spacing:-0.481px;">SOUS-TRAITANT</div>
<svg style="left:77px;top:412.3px;" width="15" height="13" viewBox="0 0 15 13"><path d="M0.700 0.700h12.800v8.200h-8.600l-2.700 2.700v-2.700h-1.500z" fill="#fff" stroke="#666" stroke-width="1.100" stroke-linejoin="round"/><path d="M3 3h8.200M3 4.900h8.200M3 6.700h5.400" stroke="#4a86c8" stroke-width="0.900"/></svg>
<div class="t" style="left:101.60px;top:411.40px;font-size:14px;line-height:14px;color:#454545;letter-spacing:-0.495px;">MESSAGE</div>
<div class="t" style="left:456.30px;top:411.40px;font-size:14px;line-height:14px;color:#fff;letter-spacing:-0.795px;"><span class="hl">TEST</span></div>
<div class="t" style="left:552.60px;top:411.40px;font-size:14px;line-height:14px;color:#454545;letter-spacing:-0.320px;">GROUPE <span class="hl">TEST</span>S</div>
<div class="t" style="left:809.00px;top:411.40px;font-size:14px;line-height:14px;color:#454545;letter-spacing:-0.481px;">SOUS-TRAITANT</div>
<div style="left:75px;top:364.9px;width:868px;height:34.2px;border:1px dotted #333;"></div>
<svg style="left:67.5px;top:379.2px;" width="4" height="7" viewBox="0 0 4 7"><path d="M0 0l3.600 3.300-3.600 3.300z" fill="#777"/></svg>
<div style="left:64px;top:670px;width:881px;height:1px;background:#cacaca;"></div>
<div style="left:64px;top:671.5px;width:10px;height:27px;background:#f5f5f5;"></div>
<svg style="left:67px;top:708.7px" width="1" height="1"><rect x="0" y="-2.800" width="1.100" height="5.600" fill="#8a8a8a"/><path d="M4.6 -2.8l-3 2.8 3 2.8z" fill="#8a8a8a"/><path d="M8 -2.8l-3 2.8 3 2.8z" fill="#8a8a8a"/></svg>
<svg style="left:82.5px;top:708.7px" width="1" height="1"><path d="M3 -2.8l-3 2.8 3 2.8z" fill="#8a8a8a"/><path d="M6.3 -2.8l-3 2.8 3 2.8z" fill="#8a8a8a"/></svg>
<svg style="left:99.2px;top:708.7px" width="1" height="1"><path d="M2.8 -2.8l-2.8 2.8 2.8 2.8z" fill="#8a8a8a"/></svg>
<div class="t" style="left:115.80px;top:701.40px;font-size:14px;line-height:14px;color:#555;letter-spacing:-0.250px;">5 / 6</div>
<svg style="left:155px;top:708.7px" width="1" height="1"><path d="M0 -2.8l2.8 2.8-2.8 2.8z" fill="#8a8a8a"/></svg>
<svg style="left:168px;top:708.7px" width="1" height="1"><path d="M0 -2.8l3 2.8-3 2.8z" fill="#8a8a8a"/><path d="M3.3 -2.8l3 2.8-3 2.8z" fill="#8a8a8a"/></svg>
<svg style="left:182px;top:708.7px" width="1" height="1"><path d="M0 -2.8l3 2.8-3 2.8z" fill="#8a8a8a"/><path d="M3.3 -2.8l3 2.8-3 2.8z" fill="#8a8a8a"/><rect x="6.900" y="-2.800" width="1.100" height="5.600" fill="#8a8a8a"/></svg>
<svg style="left:197px;top:708.7px" width="1" height="1"><path d="M0 0h6.400M3.200 -3.200v6.400" stroke="#c9c9c9" stroke-width="1.100"/></svg>
<svg style="left:211px;top:708.7px" width="1" height="1"><path d="M0 0h6.400M3.200 -3.200v6.400" stroke="#c9c9c9" stroke-width="1.100"/><rect x="5.600" y="2.200" width="1" height="1" fill="#c9c9c9"/></svg>
<svg style="left:225.8px;top:708.7px" width="1" height="1"><path d="M0 0h6.800" stroke="#c9c9c9" stroke-width="1.100"/></svg>
<svg style="left:241.6px;top:708.7px" width="1" height="1"><path d="M0 1.400l2.200-2.800 2.200 2.800z" fill="#d4d4d4"/></svg>
<svg style="left:254.3px;top:708.7px" width="1" height="1"><path d="M0 0.600l2.400 2.400 5.200-6" fill="none" stroke="#d0d0d0" stroke-width="1.100"/></svg>
<svg style="left:270px;top:708.7px" width="1" height="1"><path d="M0.200 -2.800l5.200 5.600M5.400 -2.800l-5.200 5.600" stroke="#d0d0d0" stroke-width="1"/></svg>
<svg style="left:284.3px;top:708.7px" width="1" height="1"><path d="M3.200 -3.200v6.400M0 0h6.400M0.900 -2.300l4.600 4.600M5.500 -2.300l-4.600 4.600" stroke="#4a4a4a" stroke-width="1"/><circle cx="3.200" cy="0" r="1.900" fill="#4a4a4a"/></svg>
<svg style="left:298.6px;top:708.7px" width="1" height="1"><path d="M3.200 -3.200v6.400M0 0h6.400M0.900 -2.300l4.600 4.600M5.500 -2.300l-4.600 4.600" stroke="#cfcfcf" stroke-width="1"/><circle cx="3.200" cy="0" r="1.900" fill="#cfcfcf"/></svg>
<svg style="left:313px;top:708.7px" width="1" height="1"><path d="M0 -3.400h7.600l-3 3.400v3.400l-1.600-1v-2.400z" fill="#555"/></svg>
<div style="left:367px;top:701px;width:656px;height:16px;background:#f0f0f0;"></div>
<div style="left:367px;top:701.5px;width:14px;height:15px;background:#fff;"></div>
<svg style="left:372px;top:706.3px;" width="4" height="5" viewBox="0 0 4 5"><path d="M3.600 0l-3.600 2.400 3.600 2.400z" fill="#c9c9c9"/></svg>
<div style="left:1009px;top:701.5px;width:14px;height:15px;background:#fff;"></div>
<svg style="left:1014px;top:706.5px;" width="4" height="5" viewBox="0 0 4 5"><path d="M0 0l3.800 2.300-3.800 2.300z" fill="#c9c9c9"/></svg>
<div class="t" style="left:2.60px;top:725.36px;font-size:10.5px;line-height:10.5px;color:#222;letter-spacing:-0.849px;">TEST Test</div>
<div style="left:81px;top:719px;width:1px;height:22.5px;background:#d4d4d4;"></div>
<div style="left:82px;top:719px;width:1px;height:22.5px;background:#fbfbfb;"></div>
<div style="left:164px;top:719px;width:1px;height:22.5px;background:#d4d4d4;"></div>
<div style="left:165px;top:719px;width:1px;height:22.5px;background:#fbfbfb;"></div>
<div style="left:187.3px;top:719px;width:1px;height:22.5px;background:#d4d4d4;"></div>
<div style="left:188.3px;top:719px;width:1px;height:22.5px;background:#fbfbfb;"></div>
<div style="left:313.4px;top:719px;width:1px;height:22.5px;background:#d4d4d4;"></div>
<div style="left:314.4px;top:719px;width:1px;height:22.5px;background:#fbfbfb;"></div>
<div style="left:321.4px;top:719px;width:1px;height:22.5px;background:#d4d4d4;"></div>
<div style="left:322.4px;top:719px;width:1px;height:22.5px;background:#fbfbfb;"></div>
<div class="t" style="left:86.30px;top:725.21px;font-size:9.5px;line-height:9.5px;color:#b3b3b3;letter-spacing:-0.667px;">MAJ</div>
<div class="t" style="left:112.60px;top:725.21px;font-size:9.5px;line-height:9.5px;color:#111;letter-spacing:-0.880px;">NUM</div>
<div class="t" style="left:143.20px;top:725.21px;font-size:9.5px;line-height:9.5px;color:#b3b3b3;letter-spacing:-0.515px;">INS</div>
<svg style="left:167px;top:723.2px;" width="14.5" height="13.5" viewBox="0 0 14.5 13.5"><path d="M7.400 0.200h6.400v13h-13.600v-6.800h7.200z" fill="#3a6fb2"/><path d="M9.600 6v3.600h-5" fill="none" stroke="#fff" stroke-width="1.100"/><path d="M2.600 9.600l2.400-1.800v3.600z" fill="#fff"/></svg>
<svg style="left:195px;top:721.2px;" width="14" height="15" viewBox="0 0 14 15"><path d="M6.900 0.200c.7 0 1.100.4 1.100 1 2.200.6 3.300 2.600 3.300 5 0 2.800.8 4.200 2.300 5.400v1h-13.400v-1c1.500-1.200 2.300-2.600 2.300-5.400 0-2.400 1.100-4.400 3.300-5 0-.6.400-1 1.100-1z" fill="#f1b04e"/><path d="M5.200 13.400h3.400c0 .9-.8 1.400-1.700 1.400s-1.700-.5-1.700-1.400z" fill="#444"/></svg>
<div class="t" style="left:211.40px;top:722.62px;font-size:10.2px;line-height:10.2px;color:#333;">0</div>
<svg style="left:222.8px;top:721.2px;" width="14.5" height="14" viewBox="0 0 14.5 14"><path d="M11.300 3.800a5.800 5.800 0 1 0 1.100 4.800" fill="none" stroke="#2fa05c" stroke-width="1.700"/><path d="M14 0.600l-4.800.5 3.200 4z" fill="#2fa05c"/><path d="M7.200 3.400v4l-2 2.400" fill="none" stroke="#333" stroke-width="1.100"/></svg>
<div class="t" style="left:239.80px;top:722.62px;font-size:10.2px;line-height:10.2px;color:#333;">0</div>
<svg style="left:251.3px;top:720.8px;" width="14.5" height="14.5" viewBox="0 0 14.5 14.5"><rect x="0.500" y="2.200" width="13.300" height="11.400" fill="#fff" stroke="#777" stroke-width="0.800"/><rect x="0.200" y="1.800" width="13.900" height="2.800" fill="#d9462c"/><rect x="3.200" y="0.200" width="1" height="2.800" fill="#b0a898"/><rect x="10.100" y="0.200" width="1" height="2.800" fill="#b0a898"/><text x="7.200" y="12.300" font-family="Liberation Sans, sans-serif" font-size="8" font-weight="700" text-anchor="middle" fill="#444">23</text></svg>
<div class="t" style="left:268.20px;top:722.62px;font-size:10.2px;line-height:10.2px;color:#333;">0</div>
<svg style="left:279.4px;top:721.2px;" width="14.5" height="14" viewBox="0 0 14.5 14"><path d="M2.900 3.800a5.800 5.800 0 1 1-1.100 4.800" fill="none" stroke="#2fa05c" stroke-width="1.700"/><path d="M0.200 0.600l4.800.5-3.200 4z" fill="#2fa05c"/><path d="M7 3.400v4l2.400 1.800" fill="none" stroke="#333" stroke-width="1.100"/></svg>
<div class="t" style="left:296.30px;top:722.62px;font-size:10.2px;line-height:10.2px;color:#333;letter-spacing:-0.522px;">35</div>
<svg style="left:331.2px;top:721.6px;" width="11" height="13.5" viewBox="0 0 11 13.5"><path d="M5.500 0.200c3 0 5.200 2.200 5.200 5 0 3-3 5.600-5.200 8-2.200-2.400-5.200-5-5.200-8 0-2.800 2.200-5 5.200-5z" fill="#c8412b"/><circle cx="5.500" cy="5" r="2" fill="#fff"/></svg>
<div style="left:1017.5px;top:729.3px;width:1.6px;height:1.6px;background:#9a9a9a;"></div>
<div style="left:1013.9px;top:732.9px;width:1.6px;height:1.6px;background:#9a9a9a;"></div>
<div style="left:1017.5px;top:732.9px;width:1.6px;height:1.6px;background:#9a9a9a;"></div>
<div style="left:1010.3px;top:736.5px;width:1.6px;height:1.6px;background:#9a9a9a;"></div>
<div style="left:1013.9px;top:736.5px;width:1.6px;height:1.6px;background:#9a9a9a;"></div>
<div style="left:1017.5px;top:736.5px;width:1.6px;height:1.6px;background:#9a9a9a;"></div>
<div class="t" style="left:785.80px;top:133.84px;font-size:69px;line-height:69px;color:#e8590c;-webkit-text-stroke:1.2px #e8590c;transform:scaleX(1.150);transform-origin:0 0;">2</div>
<div class="t" style="left:95.80px;top:502.84px;font-size:69px;line-height:69px;color:#e8590c;-webkit-text-stroke:1.2px #e8590c;transform:scaleX(1.100);transform-origin:0 0;">3</div>
<div class="t" style="left:735.30px;top:625.38px;font-size:79px;line-height:79px;color:#e8590c;-webkit-text-stroke:2.4px #e8590c;clip-path:inset(0 0 20.300px 0);">1</div>
<svg style="left:3px;top:6px;" width="13" height="13" viewBox="0 0 13 13"><circle cx="6.500" cy="6.500" r="5.500" fill="none" stroke="#f07820" stroke-width="1.400"/><circle cx="6.500" cy="5.200" r="1.800" fill="#f07820"/><path d="M3.200 9.600c0-2 1.400-2.800 3.300-2.800s3.300.8 3.300 2.800z" fill="#f07820"/><path d="M10.400 0.800l1.800 1.600-2.200.8zM2.600 12.200l-1.800-1.600 2.200-.8z" fill="#f07820"/></svg>
<svg style="left:63px;top:31.3px;" width="16" height="14" viewBox="0 0 16 14"><rect x="0.500" y="0.600" width="9.800" height="8.600" fill="#fff" stroke="#777" stroke-width="0.800"/><rect x="0.100" y="0.100" width="10.600" height="1.900" fill="#3d7cc4"/><path d="M1.200 3.8h7.600" stroke="#9a9a9a" stroke-width="0.800"/><path d="M1.200 6.0h7.600" stroke="#9a9a9a" stroke-width="0.800"/><path d="M1.200 8.2h7.600" stroke="#9a9a9a" stroke-width="0.800"/><path d="M3.400 2v7.200M6.800 2v7.200" stroke="#bbb" stroke-width="0.600"/><path d="M8.800 5h4.600v3.400h-.8v4l-1.400 1.200-1.400-1.200v-1l-.8-.500.800-.700v-1.800h-1z" fill="#e9a52f"/></svg>
<div style="left:141px;top:204px;width:330px;height:429px;background:#fff;border:1px solid #d9d9d9;box-shadow:2px 2px 4px rgba(0,0,0,0.27);"></div>
<div style="left:143px;top:492.2px;width:329.3px;height:21.4px;background:#d6d6d6;"></div>
<div class="t" style="left:172.90px;top:212.62px;font-size:10.2px;line-height:10.2px;color:#363636;letter-spacing:-0.203px;">Tri ascendant</div>
<div class="t" style="left:172.90px;top:234.62px;font-size:10.2px;line-height:10.2px;color:#363636;letter-spacing:-0.137px;">Tri descendant</div>
<div class="t" style="left:172.90px;top:256.62px;font-size:10.2px;line-height:10.2px;color:#363636;letter-spacing:-0.114px;">Enlever tri</div>
<div style="left:168px;top:273.6px;width:304px;height:1px;background:#e0e0e0;"></div>
<div class="t" style="left:172.90px;top:281.62px;font-size:10.2px;line-height:10.2px;color:#363636;letter-spacing:-0.067px;">Grouper par ce champ</div>
<div class="t" style="left:172.90px;top:303.62px;font-size:10.2px;line-height:10.2px;color:#363636;letter-spacing:0.056px;">Zone de groupement</div>
<div style="left:168px;top:320.75px;width:304px;height:1px;background:#e0e0e0;"></div>
<div class="t" style="left:172.90px;top:328.62px;font-size:10.2px;line-height:10.2px;color:#363636;letter-spacing:-0.162px;">Pied de page</div>
<div class="t" style="left:172.90px;top:350.62px;font-size:10.2px;line-height:10.2px;color:#8e8e8e;letter-spacing:-0.036px;">Pied de groupe</div>
<div style="left:168px;top:367.6px;width:304px;height:1px;background:#e0e0e0;"></div>
<div class="t" style="left:172.90px;top:376.62px;font-size:10.2px;line-height:10.2px;color:#363636;letter-spacing:-0.009px;">Cacher cette colonne</div>
<div class="t" style="left:172.90px;top:398.62px;font-size:10.2px;line-height:10.2px;color:#363636;letter-spacing:-0.028px;">Fenêtre choix champ</div>
<div style="left:168px;top:414.9px;width:304px;height:1px;background:#e0e0e0;"></div>
<div class="t" style="left:172.90px;top:423.62px;font-size:10.2px;line-height:10.2px;color:#363636;letter-spacing:0.040px;">Largeur optimale</div>
<div style="left:168px;top:440.0px;width:304px;height:1px;background:#e0e0e0;"></div>
<div class="t" style="left:172.90px;top:448.62px;font-size:10.2px;line-height:10.2px;color:#363636;letter-spacing:0.034px;">Largeur optimale (toutes colonnes)</div>
<div style="left:168px;top:465.1px;width:304px;height:1px;background:#e0e0e0;"></div>
<div class="t" style="left:172.90px;top:473.62px;font-size:10.2px;line-height:10.2px;color:#363636;letter-spacing:0.159px;"><u>E</u>xporter &amp; imprimer</div>
<svg style="left:462.5px;top:474.7px;" width="4" height="6" viewBox="0 0 4 6"><path d="M0 0l3.500 3-3.500 3z" fill="#333"/></svg>
<div style="left:168px;top:490.1px;width:304px;height:1px;background:#e0e0e0;"></div>
<div class="t" style="left:172.90px;top:497.62px;font-size:10.2px;line-height:10.2px;color:#363636;letter-spacing:0.099px;"><u>O</u>ptions d'affichage complémentaires</div>
<svg style="left:462.5px;top:499.5px;" width="4" height="6" viewBox="0 0 4 6"><path d="M0 0l3.500 3-3.500 3z" fill="#333"/></svg>
<div style="left:168px;top:514.9px;width:304px;height:1px;background:#e0e0e0;"></div>
<div class="t" style="left:172.90px;top:522.62px;font-size:10.2px;line-height:10.2px;color:#363636;letter-spacing:-0.018px;">Toujours étendre</div>
<div style="left:168px;top:540.1px;width:304px;height:1px;background:#e0e0e0;"></div>
<div class="t" style="left:172.90px;top:547.62px;font-size:10.2px;line-height:10.2px;color:#363636;letter-spacing:-0.014px;">Mode économie d&#x27;énergie INACTIF (=Données en mémoire)</div>
<div style="left:168px;top:564.3px;width:304px;height:1px;background:#e0e0e0;"></div>
<div class="t" style="left:172.90px;top:572.62px;font-size:10.2px;line-height:10.2px;color:#363636;letter-spacing:-0.121px;">Paramétrage visuel</div>
<svg style="left:462.5px;top:574px;" width="4" height="6" viewBox="0 0 4 6"><path d="M0 0l3.500 3-3.500 3z" fill="#333"/></svg>
<div class="t" style="left:172.90px;top:594.62px;font-size:10.2px;line-height:10.2px;color:#363636;letter-spacing:0.075px;">Modèles d&#x27;organisation</div>
<div class="t" style="left:315.00px;top:594.62px;font-size:10.2px;line-height:10.2px;color:#363636;letter-spacing:-0.336px;">(CTRL+SHIFT+M)</div>
<div class="t" style="left:172.90px;top:616.62px;font-size:10.2px;line-height:10.2px;color:#363636;">Calcul entête de <u>g</u>roupe</div>
<svg style="left:147.5px;top:210.3px;" width="13" height="14" viewBox="0 0 13 14"><text x="0" y="6" font-family="Liberation Sans, sans-serif" font-size="7.800" font-weight="700" fill="#4a78b8">A</text><text x="0" y="13.200" font-family="Liberation Sans, sans-serif" font-size="7.800" font-weight="700" fill="#b8434a">Z</text><path d="M10 0.500v11" stroke="#555" stroke-width="1.100"/><path d="M7.800 9.800h4.400l-2.200 3.400z" fill="#555"/></svg>
<svg style="left:147.5px;top:232.4px;" width="13" height="14" viewBox="0 0 13 14"><text x="0" y="6" font-family="Liberation Sans, sans-serif" font-size="7.800" font-weight="700" fill="#b8434a">Z</text><text x="0" y="13.200" font-family="Liberation Sans, sans-serif" font-size="7.800" font-weight="700" fill="#4a78b8">A</text><path d="M10 0.500v11" stroke="#555" stroke-width="1.100"/><path d="M7.800 9.800h4.400l-2.200 3.400z" fill="#555"/></svg>
<svg style="left:146.8px;top:281.2px;" width="15" height="10" viewBox="0 0 15 10"><rect x="0.500" y="0.500" width="9.200" height="3.300" rx="1.600" fill="#c9daf0" stroke="#4a78b8" stroke-width="0.900"/><rect x="4.200" y="5.800" width="9.600" height="3.300" rx="1.600" fill="#c9daf0" stroke="#4a78b8" stroke-width="0.900"/></svg>
<div style="left:144px;top:299.4px;width:17.5px;height:17.5px;background:#f4f8fd;border:1px solid #3e8edb;"></div>
<svg style="left:147px;top:302.2px;" width="14" height="13" viewBox="0 0 14 13"><rect x="0.500" y="0.500" width="12.800" height="11.600" fill="#fff" stroke="#4b5f8a" stroke-width="0.900"/><rect x="1" y="1" width="11.800" height="3.600" fill="#dfe7f3"/><rect x="2" y="2" width="4.400" height="1.600" fill="#4a78b8"/><path d="M0.500 5h12.800M0.500 8.400h12.800M4.800 5v7M9 5v7" stroke="#4b5f8a" stroke-width="0.800"/></svg>
<div style="left:144px;top:324.1px;width:17.5px;height:17.5px;background:#f4f8fd;border:1px solid #3e8edb;"></div>
<svg style="left:147px;top:327px;" width="14" height="13" viewBox="0 0 14 13"><rect x="0.500" y="0.500" width="12.800" height="11.600" fill="#fff" stroke="#4b5f8a" stroke-width="0.900"/><path d="M0.500 3.400h12.800M0.500 6.400h12.800M4.800 0.500v9M9 0.500v9" stroke="#9aa3b5" stroke-width="0.700"/><rect x="0.900" y="9.200" width="12" height="2.600" fill="#4a78b8"/><path d="M4.800 9.200v2.600M9 9.200v2.600" stroke="#dfe7f3" stroke-width="0.700"/></svg>
<svg style="left:147px;top:349.4px;" width="14" height="13" viewBox="0 0 14 13"><rect x="0.500" y="0.500" width="12.800" height="11.600" fill="#fafafa" stroke="#b5b5b5" stroke-width="0.900"/><path d="M0.500 3.600h12.800M0.500 9h12.800M4.800 0.500v11.600M9 0.500v11.600" stroke="#cfcfcf" stroke-width="0.700"/><rect x="0.900" y="5.200" width="12" height="2.400" fill="#d9d9d9" stroke="#aaa" stroke-width="0.600"/></svg>
<svg style="left:147px;top:396.3px;" width="14" height="14" viewBox="0 0 14 14"><rect x="0.400" y="0.400" width="10" height="8.600" fill="#fff" stroke="#9aa3b5" stroke-width="0.700"/><rect x="0.400" y="0.400" width="10" height="2.200" fill="#4a78b8"/><path d="M3.700 0.400v8.600M7 0.400v8.600" stroke="#c9d3e5" stroke-width="0.600"/><rect x="3.800" y="4.600" width="9.600" height="8.600" fill="#fff" stroke="#444" stroke-width="1"/><rect x="5.600" y="6.800" width="6" height="1.700" fill="#4a78b8"/><rect x="5.600" y="9.600" width="6" height="1.700" fill="#4a78b8"/></svg>
<svg style="left:147px;top:422.3px;" width="14" height="12" viewBox="0 0 14 12"><rect x="0.500" y="0.500" width="12.800" height="3.600" rx="1" fill="#c9daf0" stroke="#4a78b8" stroke-width="0.900"/><path d="M0.600 6v5.600M13.200 6v5.600M1.200 8.800h11.400" stroke="#444" stroke-width="1"/><path d="M0.800 8.800l2.600-1.800v3.600zM13 8.800l-2.600-1.800v3.600z" fill="#444"/></svg>
<svg style="left:147.5px;top:472px;" width="13.5" height="13" viewBox="0 0 13.5 13"><path d="M0.600 0.600h12v11.800h-12z" fill="#fff" stroke="#b27acb" stroke-width="1.300"/><rect x="0.600" y="6.400" width="12" height="6" fill="#b27acb"/><rect x="2.800" y="1" width="7.600" height="4.200" fill="#eee3f4" stroke="#b27acb" stroke-width="0.600"/><rect x="3.200" y="8.800" width="6.800" height="3.600" fill="#fff"/><rect x="3.800" y="9.600" width="1.800" height="2.800" fill="#b27acb"/></svg>
<svg style="left:147px;top:546px;" width="15" height="14" viewBox="0 0 15 14"><path d="M0.400 2.200v8.400c0 1.200 2.200 2.200 5 2.200s5-1 5-2.200v-8.400z" fill="#f3cf86"/><ellipse cx="5.400" cy="2.200" rx="5" ry="1.900" fill="#f7e0ad" stroke="#e8b45c" stroke-width="0.500"/><path d="M12.600 6.600l-5 2.800 5 2.800" fill="none" stroke="#3aa66a" stroke-width="1"/><circle cx="12.600" cy="6.600" r="1.500" fill="#3aa66a"/><circle cx="7.600" cy="9.400" r="1.500" fill="#3aa66a"/><circle cx="12.600" cy="12.200" r="1.500" fill="#3aa66a"/></svg>
<div style="left:472.5px;top:490.7px;width:261.3px;height:213.7px;background:#fff;border:1px solid #d9d9d9;box-shadow:2px 2px 4px rgba(0,0,0,0.27);"></div>
<div style="left:474.3px;top:658.4px;width:259.5px;height:21.6px;background:#d6d6d6;"></div>
<div class="t" style="left:504.00px;top:497.62px;font-size:10.2px;line-height:10.2px;color:#363636;letter-spacing:-0.062px;"><u>P</u>leine largeur</div>
<div class="t" style="left:504.00px;top:520.62px;font-size:10.2px;line-height:10.2px;color:#363636;letter-spacing:0.093px;">Hauteur entête colonne automatique</div>
<div class="t" style="left:504.00px;top:542.62px;font-size:10.2px;line-height:10.2px;color:#363636;letter-spacing:0.139px;"><u>H</u>auteur ligne automatique</div>
<div style="left:499.8px;top:559.2px;width:235px;height:1px;background:#e0e0e0;"></div>
<div class="t" style="left:504.00px;top:567.62px;font-size:10.2px;line-height:10.2px;color:#363636;letter-spacing:-0.181px;">Groupes fixes</div>
<div class="t" style="left:504.00px;top:589.62px;font-size:10.2px;line-height:10.2px;color:#363636;letter-spacing:0.014px;">Groupement date</div>
<svg style="left:724.4px;top:591px;" width="4" height="6" viewBox="0 0 4 6"><path d="M0 0l3.500 3-3.500 3z" fill="#333"/></svg>
<div style="left:499.8px;top:606.6px;width:235px;height:1px;background:#e0e0e0;"></div>
<div class="t" style="left:504.00px;top:614.62px;font-size:10.2px;line-height:10.2px;color:#363636;">Boutons Editions</div>
<svg style="left:724.4px;top:616px;" width="4" height="6" viewBox="0 0 4 6"><path d="M0 0l3.500 3-3.500 3z" fill="#333"/></svg>
<div style="left:499.8px;top:631.6px;width:235px;height:1px;background:#e0e0e0;"></div>
<div class="t" style="left:504.00px;top:639.62px;font-size:10.2px;line-height:10.2px;color:#363636;letter-spacing:0.042px;">Voir ligne de filtre</div>
<div style="left:499.8px;top:656.1px;width:235px;height:1px;background:#e0e0e0;"></div>
<div class="t" style="left:504.00px;top:664.62px;font-size:10.2px;line-height:10.2px;color:#363636;letter-spacing:-0.176px;">Recherche Full Texte</div>
<div class="t" style="left:632.20px;top:664.62px;font-size:10.2px;line-height:10.2px;color:#444;letter-spacing:-0.497px;">(CTRL+SHIFT+F)</div>
<div style="left:499.8px;top:680.8px;width:235px;height:1px;background:#e0e0e0;"></div>
<div class="t" style="left:504.00px;top:689.62px;font-size:10.2px;line-height:10.2px;color:#363636;letter-spacing:-0.271px;"><u>C</u>ases à cocher</div>
<svg style="left:724.4px;top:690.8px;" width="4" height="6" viewBox="0 0 4 6"><path d="M0 0l3.500 3-3.500 3z" fill="#333"/></svg>
<svg style="left:478px;top:496px;" width="15" height="14" viewBox="0 0 15 14"><path d="M0.500 0.500h6.600l3 3v7.400h-9.600z" fill="#fff" stroke="#777" stroke-width="0.900"/><path d="M7.100 0.500v3h3" fill="none" stroke="#777" stroke-width="0.800"/><path d="M2.400 3.400h2.600M2.400 5.400h2.600" stroke="#aaa" stroke-width="0.800"/><path d="M5.800 10.400h6.400" stroke="#4a86c8" stroke-width="1.600"/><path d="M3.600 10.400l3.400-3v6zM14.400 10.400l-3.400-3v6z" fill="#4a86c8"/></svg>
<svg style="left:478px;top:518px;" width="15" height="14" viewBox="0 0 15 14"><rect x="0.500" y="0.500" width="11.400" height="11" fill="#fff" stroke="#8a8a8a" stroke-width="0.900"/><rect x="0.200" y="0.200" width="12" height="2.400" fill="#5b8fd0"/><rect x="1.400" y="3.600" width="4.200" height="7" fill="#dbe9fb"/><path d="M6 2.600v9" stroke="#aaa" stroke-width="0.700"/><path d="M12.600 4.600l1.800 1.800-6.400 6.400-2.600.8.800-2.600z" fill="#4a86c8" stroke="#fff" stroke-width="0.500"/></svg>
<svg style="left:478px;top:540.5px;" width="15" height="14" viewBox="0 0 15 14"><path d="M0.500 0.500h6l2.400 2.400v10h-8.400z" fill="#fff" stroke="#777" stroke-width="0.900"/><path d="M2.200 3.600h3.400M2.200 5.600h3.400M2.200 7.600h3.400M2.200 9.600h3.400" stroke="#999" stroke-width="0.800"/><path d="M11.400 3v8" stroke="#4a86c8" stroke-width="1.600"/><path d="M11.400 0.400l3 3.600h-6zM11.400 13.600l3-3.600h-6z" fill="#4a86c8"/></svg>
<svg style="left:480.3px;top:568.8px;" width="10" height="8" viewBox="0 0 10 8"><path d="M0.600 4.200l2.800 2.900 5.800-6.500" fill="none" stroke="#444" stroke-width="1.400"/></svg>
<svg style="left:478px;top:587.5px;" width="14.5" height="14.5" viewBox="0 0 14.5 14.5"><rect x="0.500" y="2" width="13.200" height="11.600" fill="#fff" stroke="#999" stroke-width="0.800"/><rect x="0.200" y="1.800" width="13.800" height="2.600" fill="#d9462c"/><rect x="3.200" y="0.200" width="1" height="2.800" fill="#b0a898"/><rect x="10" y="0.200" width="1" height="2.800" fill="#b0a898"/><text x="7.100" y="12" font-family="Liberation Sans, sans-serif" font-size="7.800" font-weight="700" text-anchor="middle" fill="#555">23</text></svg>
<svg style="left:478px;top:662.5px;" width="15" height="14" viewBox="0 0 15 14"><text x="0.400" y="5.800" font-family="Liberation Sans, sans-serif" font-size="6.600" fill="#2f9a62" textLength="8.500" lengthAdjust="spacingAndGlyphs">AB</text><text x="5.800" y="13.200" font-family="Liberation Sans, sans-serif" font-size="6.600" fill="#2f9a62" textLength="8.500" lengthAdjust="spacingAndGlyphs">AC</text><path d="M1.600 7v2.400h3" fill="none" stroke="#3b78c9" stroke-width="1"/><path d="M3.800 7.600l2 1.800-2 1.800z" fill="#3b78c9"/></svg>
<div style="left:0px;top:0px;width:1024px;height:1px;background:#1b74c5;"></div>
<div style="left:0px;top:0px;width:1px;height:744px;background:#1b74c5;"></div>
<div style="left:1023px;top:0px;width:1px;height:744px;background:#1b74c5;"></div>
<div style="left:0px;top:743px;width:1024px;height:1px;background:#1b74c5;"></div>
</div>
</body>
</html>
